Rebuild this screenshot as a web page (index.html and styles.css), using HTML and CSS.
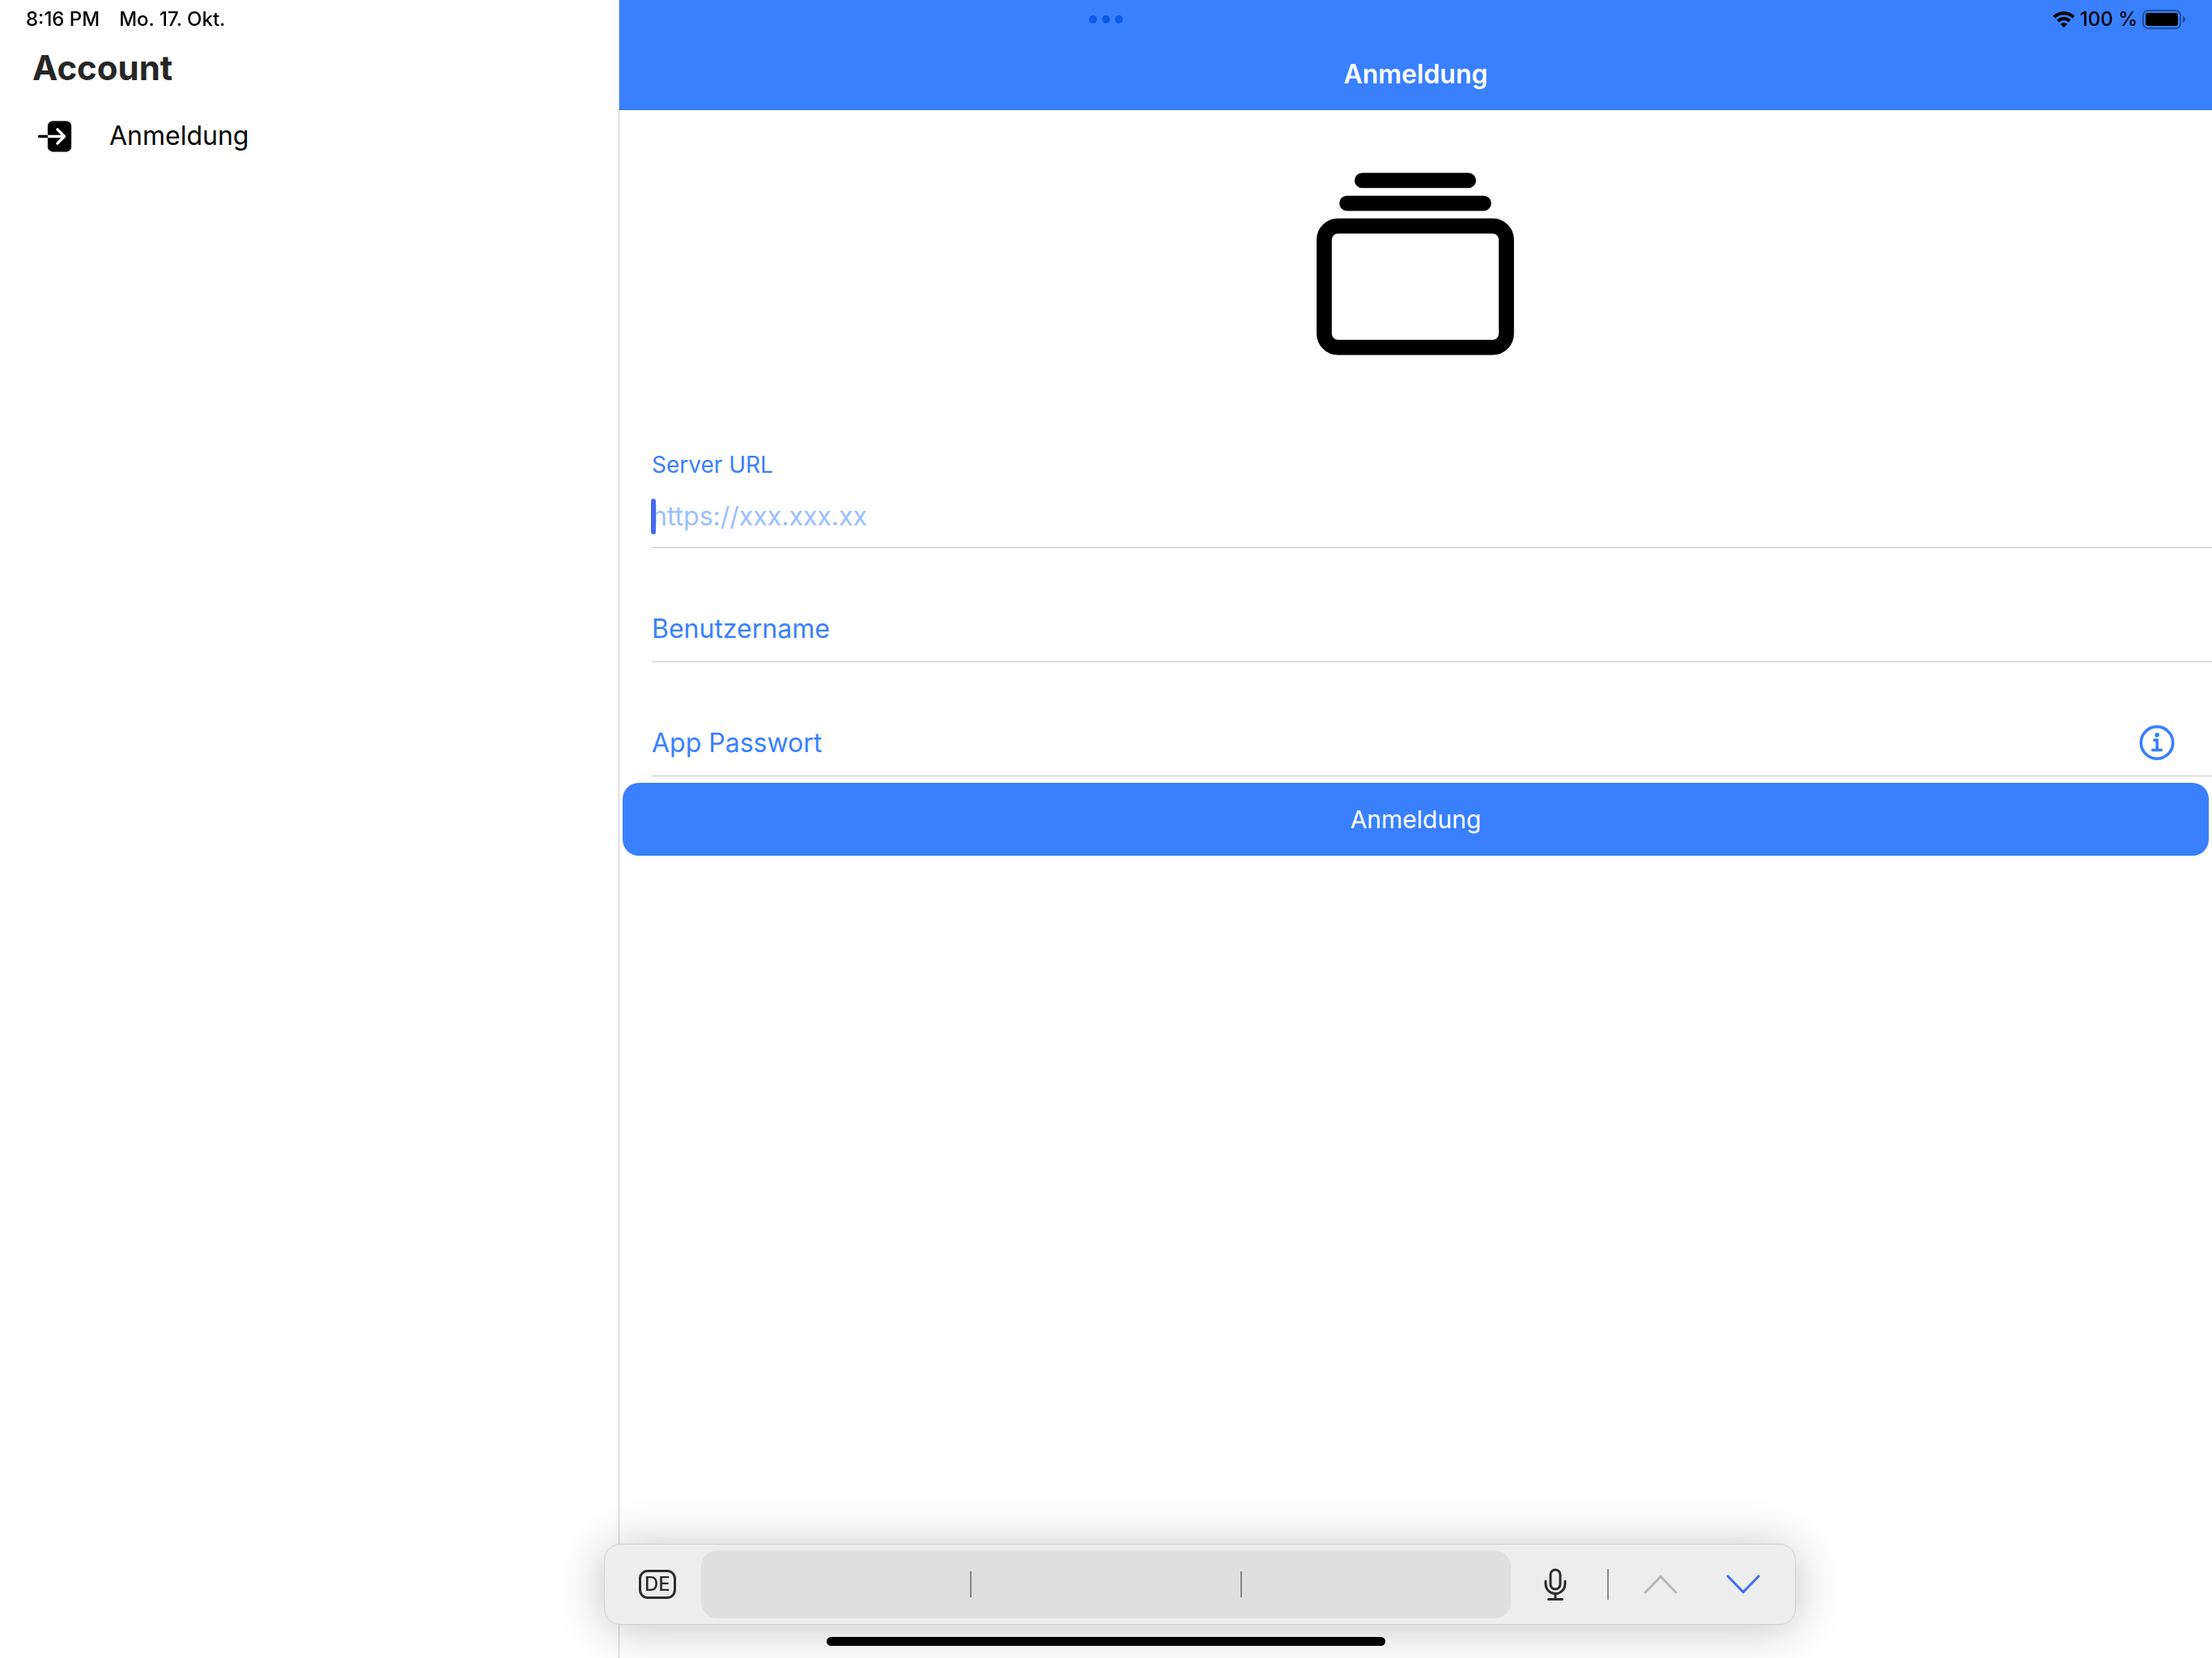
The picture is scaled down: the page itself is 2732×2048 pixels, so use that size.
FILE: index.html
```html
<!DOCTYPE html>
<html lang="de">
<head>
<meta charset="utf-8">
<meta name="viewport" content="width=device-width, initial-scale=1">
<title>Anmeldung</title>
<link rel="stylesheet" href="styles.css">
</head>
<body>
<div class="status-bar">
  <div class="status-left"><span>8:16 PM</span><span>Mo. 17. Okt.</span></div>
  <div class="multitask"><i></i><i></i><i></i></div>
  <div class="status-right">
    <svg class="wifi" viewBox="0 0 28 22" aria-hidden="true">
      <path d="M2 8.200A17 17 0 0 1 26 8.200M6.800 13A10.300 10.300 0 0 1 21.200 13" fill="none" stroke="#000" stroke-width="4"/>
      <path d="M14 21l-4.200-4.200a6 6 0 0 1 8.400 0z"/>
    </svg>
    <span>100 %</span>
    <svg class="battery" viewBox="0 0 54 24" aria-hidden="true">
      <rect x="1" y="1" width="46" height="22" rx="6" fill="none" stroke="#000" stroke-opacity=".4" stroke-width="2"/>
      <rect x="4" y="4" width="40" height="16" rx="3"/>
      <path d="M50 8c4 1 4 7 0 8z" fill-opacity=".4"/>
    </svg>
  </div>
</div>

<div class="split">
  <nav class="menu">
    <h1 class="menu-title">Account</h1>
    <a class="menu-item" href="#anmeldung">
      <svg class="menu-icon" viewBox="0 0 512 512" aria-hidden="true"><path d="M392 80H232a56.060 56.060 0 00-56 56v104h153.370l-52.680-52.690a16 16 0 0122.620-22.620l80 80a16 16 0 010 22.620l-80 80a16 16 0 01-22.620-22.620L329.370 272H176v104c0 32.050 33.790 56 64 56h152a56.060 56.060 0 0056-56V136a56.060 56.060 0 00-56-56zM80 240a16 16 0 000 32h96v-32z"/></svg>
      <span>Anmeldung</span>
    </a>
  </nav>

  <div class="page">
    <header class="toolbar"><h2 class="toolbar-title">Anmeldung</h2></header>
    <main class="content">
      <svg class="logo" viewBox="0 0 512 512" fill="none" stroke="#000" stroke-width="32" stroke-linecap="round" aria-hidden="true">
        <rect x="64" y="176" width="384" height="256" rx="28.870"/>
        <path d="M144 80h224M112 128h288"/>
      </svg>
      <form class="login" id="anmeldung">
        <div class="field field-stacked">
          <label for="server">Server URL</label>
          <div class="entry">
            <input id="server" type="url" placeholder="https://xxx.xxx.xx">
            <span class="caret"></span>
          </div>
        </div>
        <div class="field">
          <label for="user">Benutzername</label>
          <input id="user" type="text">
        </div>
        <div class="field">
          <label for="password">App Passwort</label>
          <input id="password" type="password">
          <button class="info" type="button" aria-label="Info">
            <svg viewBox="0 0 512 512" fill="none" stroke="currentColor" stroke-width="36" stroke-linecap="round" stroke-linejoin="round" aria-hidden="true">
              <circle cx="256" cy="250" r="194"/>
              <path d="M226 218h32v118M204 340h104"/>
              <circle cx="257" cy="156" r="28" fill="currentColor" stroke="none"/>
            </svg>
          </button>
        </div>
        <button class="submit" type="submit">Anmeldung</button>
      </form>
    </main>
  </div>
</div>

<div class="keyboard-bar">
  <button class="key-lang" type="button">DE</button>
  <div class="suggestions"><span></span><span></span><span></span></div>
  <button class="key" type="button" aria-label="Diktieren">
    <svg class="mic" viewBox="0 0 28 40" fill="none" stroke="#2c2c2c" stroke-width="3" stroke-linecap="round" aria-hidden="true">
      <rect x="8" y="2" width="12" height="24" rx="6"/>
      <path d="M2 16v3.500a12 12 0 0 0 24 0V16M14 31.500v7M5.500 38.500h17"/>
    </svg>
  </button>
  <span class="divider"></span>
  <button class="key" type="button" aria-label="Vorheriges Feld" disabled>
    <svg class="chevron" viewBox="0 0 42 24" fill="none" stroke="#b8b8b8" stroke-width="3" stroke-linecap="round" aria-hidden="true"><path d="M2 22L21 2.500L40 22"/></svg>
  </button>
  <button class="key" type="button" aria-label="Nächstes Feld">
    <svg class="chevron" viewBox="0 0 42 24" fill="none" stroke="#416bf6" stroke-width="3" stroke-linecap="round" aria-hidden="true"><path d="M2 2L21 21.500L40 2"/></svg>
  </button>
</div>
<div class="home-indicator"></div>
</body>
</html>
```
FILE: styles.css
```css
:root {
  --primary: #3880ff;
  --line: #c8c7cc;
}

* {
  box-sizing: border-box;
}

body {
  margin: 0;
  background: #fff;
  color: #000;
  font: 32px/44px Inter, "Liberation Sans", sans-serif;
}

button,
input {
  margin: 0;
  padding: 0;
  border: 0;
  background: none;
  color: inherit;
  font: inherit;
}

svg {
  display: block;
}

/* System status bar, above both panes */
.status-bar {
  position: fixed;
  top: 0;
  left: 0;
  right: 0;
  z-index: 2;
  display: grid;
  grid-template-columns: 1fr auto 1fr;
  align-items: center;
  height: 48px;
  padding: 0 32px;
  font-size: 24px;
  font-weight: 500;
}

.status-left {
  display: flex;
  gap: 24px;
}

.multitask {
  display: flex;
  gap: 6px;
}

.multitask i {
  width: 10px;
  height: 10px;
  border-radius: 50%;
  background: #0a5be6;
}

.status-right {
  display: flex;
  justify-content: flex-end;
  align-items: center;
  gap: 6px;
}

.wifi {
  width: 28px;
  height: 22px;
}

.battery {
  width: 54px;
  height: 24px;
}

/* Two panes */
.split {
  display: flex;
  min-height: 100vh;
}

.menu {
  flex: 0 0 28%;
  padding: 56px 0 0;
  border-right: 1px solid var(--line);
}

.menu-title {
  margin: 0 0 24px;
  padding: 0 40px;
  color: #262626;
  font-size: 42px;
  line-height: 56px;
  font-weight: 700;
}

.menu-item {
  display: flex;
  align-items: center;
  gap: 40px;
  height: 64px;
  padding: 0 40px;
  color: inherit;
  text-decoration: none;
}

.menu-icon {
  width: 55px;
  height: 55px;
}

.page {
  flex: 1;
  min-width: 0;
}

.toolbar {
  display: flex;
  align-items: center;
  justify-content: center;
  height: 136px;
  padding-top: 48px;
  border-bottom: 1px solid #3171e0;
  background: var(--primary);
  color: #fff;
}

.toolbar-title {
  margin: 0;
  font-size: 32px;
  font-weight: 600;
}

.content {
  padding-top: 40px;
}

.logo {
  width: 300px;
  height: 300px;
  margin: 0 auto;
}

/* Login form */
.field {
  display: flex;
  align-items: center;
  gap: 24px;
  margin-left: 40px;
  padding: 78px 42px 18px 0;
  border-bottom: 1px solid var(--line);
  color: var(--primary);
}

.field input {
  flex: 1;
  min-width: 0;
  height: 44px;
  outline: 0;
}

.field-stacked {
  flex-direction: column;
  align-items: stretch;
  gap: 22px;
  padding-bottom: 16px;
}

.field-stacked label {
  font-size: 28px;
  line-height: 40px;
}

.entry {
  position: relative;
  display: flex;
}

.entry input::placeholder {
  color: #9bbfff;
  opacity: 1;
}

.caret {
  position: absolute;
  top: 0;
  left: -1px;
  width: 6px;
  height: 44px;
  border-radius: 3px;
  background: #456bf0;
}

.info {
  height: 44px;
  display: flex;
  align-items: center;
}

.info svg {
  width: 52px;
  height: 52px;
}

.submit {
  display: block;
  width: calc(100% - 8px);
  height: 90px;
  margin: 8px 4px;
  border-radius: 20px;
  background: var(--primary);
  color: #fff;
  font-size: 30px;
}

/* Floating keyboard shortcut bar */
.keyboard-bar {
  position: fixed;
  left: calc(28% - 19px);
  bottom: 41px;
  display: flex;
  align-items: center;
  width: 1472px;
  height: 100px;
  padding-left: 42px;
  border: 1px solid #d0d0d0;
  border-radius: 20px;
  background: #ededed;
  box-shadow: 0 4px 60px rgba(0, 0, 0, .24);
}

.key-lang {
  width: 46px;
  height: 36px;
  border: 3px solid #2c2c2c;
  border-radius: 11px;
  color: #2c2c2c;
  font-size: 24px;
  line-height: 30px;
  font-weight: 500;
}

.suggestions {
  display: flex;
  align-items: center;
  width: 1000px;
  height: 84px;
  margin: 0 41px 0 31px;
  border-radius: 20px;
  background: #dfdfdf;
}

.suggestions span {
  flex: 1;
  height: 32px;
}

.suggestions span + span {
  border-left: 2px solid #868686;
}

.mic {
  width: 28px;
  height: 40px;
}

.divider {
  width: 2px;
  height: 38px;
  margin: 0 43px 0 50px;
  background: #8a8a8e;
}

.chevron {
  width: 42px;
  height: 24px;
}

.key + .key {
  margin-left: 60px;
}

.home-indicator {
  position: fixed;
  left: 50%;
  bottom: 15px;
  width: 690px;
  height: 11px;
  margin-left: -345px;
  border-radius: 6px;
  background: #000;
}
```
